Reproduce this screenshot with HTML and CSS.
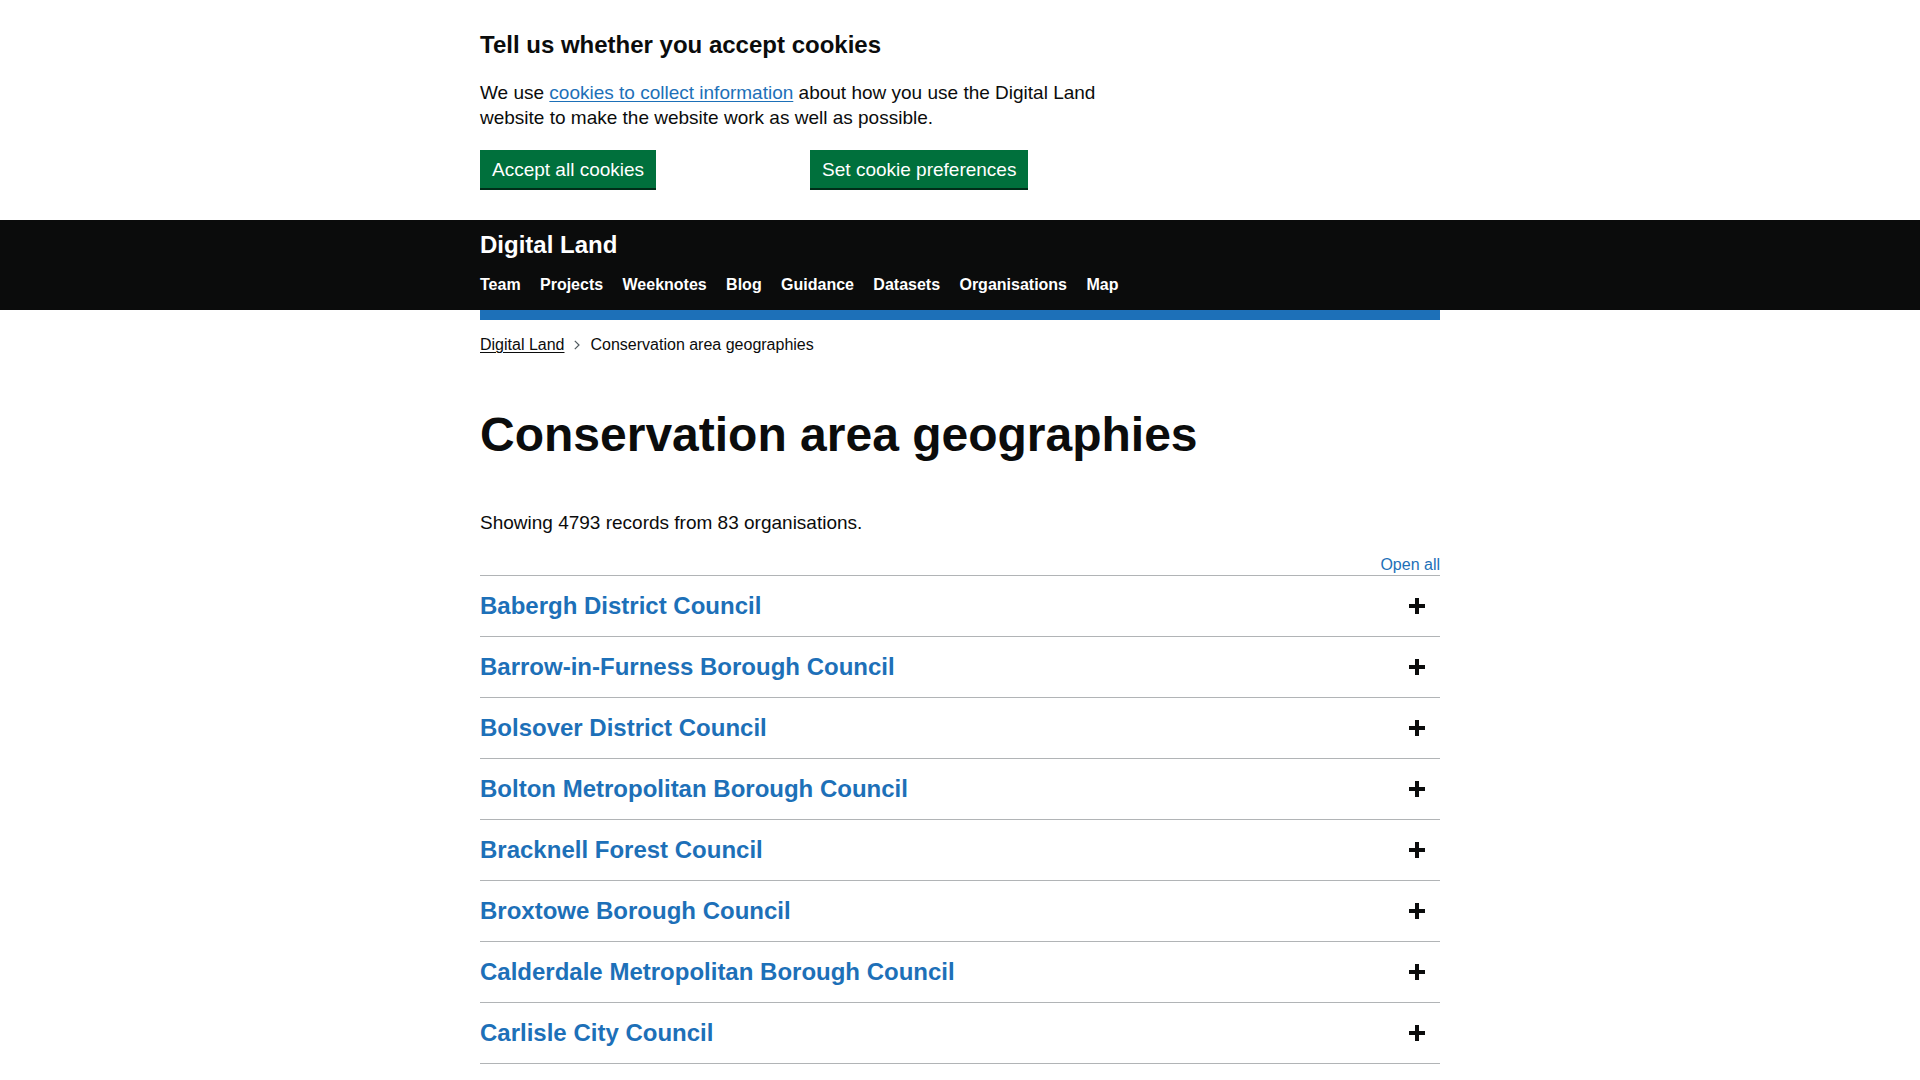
FILE: index.html
```html
<!DOCTYPE html>
<html lang="en">
<head>
<meta charset="utf-8">
<title>Conservation area geographies - Digital Land</title>
<link rel="stylesheet" href="styles.css">
</head>
<body>
<div class="cookie-banner">
  <div class="container">
    <div class="cookie-text">
      <h2 class="cookie-heading">Tell us whether you accept cookies</h2>
      <p class="cookie-body">We use <a class="link" href="#">cookies to collect information</a> about how you use the Digital Land website to make the website work as well as possible.</p>
    </div>
    <div class="button-group">
      <button class="button" type="button">Accept all cookies</button>
      <button class="button" type="button">Set cookie preferences</button>
    </div>
  </div>
</div>

<header class="header">
  <div class="container header-container">
    <a class="service-name" href="#">Digital Land</a>
    <nav>
      <ul class="nav-list">
        <li><a href="#">Team</a></li>
        <li><a href="#">Projects</a></li>
        <li><a href="#">Weeknotes</a></li>
        <li><a href="#">Blog</a></li>
        <li><a href="#">Guidance</a></li>
        <li><a href="#">Datasets</a></li>
        <li><a href="#">Organisations</a></li>
        <li><a href="#">Map</a></li>
      </ul>
    </nav>
  </div>
</header>

<div class="container">
  <ol class="breadcrumbs">
    <li><a href="#">Digital Land</a></li>
    <li class="crumb-sep"><svg width="6" height="10" viewBox="0 0 6 10" aria-hidden="true"><polyline points="0.8,0.8 5,5 0.8,9.2" fill="none" stroke="#505a5f" stroke-width="1.2"/></svg></li>
    <li>Conservation area geographies</li>
  </ol>

  <main class="main">
    <h1 class="heading-xl">Conservation area geographies</h1>
    <p class="body">Showing 4793 records from 83 organisations.</p>

    <div class="accordion">
      <div class="accordion-controls"><a href="#" class="open-all">Open all</a></div>
      <div class="section"><span class="section-title">Babergh District Council</span><span class="icon"></span></div>
      <div class="section"><span class="section-title">Barrow-in-Furness Borough Council</span><span class="icon"></span></div>
      <div class="section"><span class="section-title">Bolsover District Council</span><span class="icon"></span></div>
      <div class="section"><span class="section-title">Bolton Metropolitan Borough Council</span><span class="icon"></span></div>
      <div class="section"><span class="section-title">Bracknell Forest Council</span><span class="icon"></span></div>
      <div class="section"><span class="section-title">Broxtowe Borough Council</span><span class="icon"></span></div>
      <div class="section"><span class="section-title">Calderdale Metropolitan Borough Council</span><span class="icon"></span></div>
      <div class="section"><span class="section-title">Carlisle City Council</span><span class="icon"></span></div>
    </div>
  </main>
</div>
</body>
</html>
```

FILE: styles.css
```css
* { box-sizing: border-box; }

html, body {
  margin: 0;
  padding: 0;
  background: #ffffff;
  color: #0b0c0c;
  font-family: "Liberation Sans", Arial, sans-serif;
}

.container {
  width: 960px;
  margin: 0 auto;
}

/* Cookie banner */
.cookie-banner {
  padding-top: 30px;
}

.cookie-text {
  width: 640px;
}

.cookie-heading {
  margin: 0 0 20px;
  font-size: 24px;
  line-height: 30px;
  font-weight: 700;
}

.cookie-body {
  margin: 0 0 20px;
  font-size: 19px;
  line-height: 25px;
}

.link {
  color: #1d70b8;
  text-decoration: underline;
  text-decoration-thickness: 1px;
  text-underline-offset: 2px;
}

.button-group {
  display: flex;
  gap: 154px;
  align-items: flex-start;
}

.button {
  margin: 0 0 32px;
  padding: 8px 10px 7px;
  border: 2px solid transparent;
  border-radius: 0;
  background: #00703c;
  color: #ffffff;
  font-family: "Liberation Sans", Arial, sans-serif;
  font-size: 19px;
  line-height: 19px;
  box-shadow: 0 2px 0 #002d18;
  cursor: pointer;
}

/* Header */
.header {
  background: #0b0c0c;
  border-bottom: 10px solid #ffffff;
}

.header-container {
  padding-top: 10px;
  padding-bottom: 15px;
  border-bottom: 10px solid #1d70b8;
  margin-bottom: -10px;
}

.service-name {
  display: block;
  color: #ffffff;
  text-decoration: none;
  font-weight: 700;
  font-size: 24px;
  line-height: 30px;
}

.nav-list {
  list-style: none;
  margin: 15px 0 0;
  padding: 0;
  display: flex;
  gap: 19.4px;
}

.nav-list a {
  color: #ffffff;
  text-decoration: none;
  font-weight: 700;
  font-size: 16px;
  line-height: 20px;
  display: block;
}

/* Breadcrumbs */
.breadcrumbs {
  list-style: none;
  margin: 15px 0 0;
  padding: 0;
  display: flex;
  align-items: center;
  font-size: 16px;
  line-height: 20px;
}

.breadcrumbs a {
  color: #0b0c0c;
  text-decoration: underline;
  text-decoration-thickness: 1px;
  text-underline-offset: 2px;
}

.crumb-sep {
  display: flex;
  align-items: center;
  margin: 0 10.5px 0 9.5px;
}

/* Main */
.main {
  padding-top: 55px;
}

.heading-xl {
  margin: 0 0 50px;
  font-size: 48px;
  line-height: 50px;
  font-weight: 700;
}

.body {
  margin: 0 0 20px;
  font-size: 19px;
  line-height: 25px;
}

.accordion-controls {
  display: flex;
  justify-content: flex-end;
  font-size: 16px;
  line-height: 20px;
  border-bottom: 1px solid #b1b4b6;
}

.open-all {
  color: #1d70b8;
  text-decoration: none;
}

.section {
  display: flex;
  align-items: center;
  justify-content: space-between;
  padding: 15px 0;
  border-bottom: 1px solid #b1b4b6;
}

.section-title {
  color: #1d70b8;
  font-weight: 700;
  font-size: 24px;
  line-height: 30px;
}

.icon {
  position: relative;
  width: 16px;
  height: 16px;
  margin-right: 15px;
  flex: none;
}

.icon::before,
.icon::after {
  content: "";
  position: absolute;
  background: #0b0c0c;
}

.icon::before {
  left: 0;
  top: 6px;
  width: 16px;
  height: 4px;
}

.icon::after {
  left: 6px;
  top: 0;
  width: 4px;
  height: 16px;
}
```
